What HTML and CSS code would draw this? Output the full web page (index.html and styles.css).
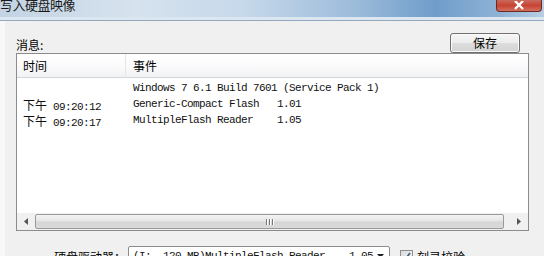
FILE: index.html
```html
<!DOCTYPE html>
<html lang="zh-CN">
<head>
<meta charset="utf-8">
<link rel="stylesheet" href="styles.css">
</head>
<body>
<div class="window">
  <div class="titlebar">
    <span class="title">写入硬盘映像</span>
    <span class="close"><svg width="12" height="9" viewBox="0 0 12 9"><path d="M2 0 L10 8 M10 0 L2 8" stroke="#fff" stroke-width="2.4" fill="none"/></svg></span>
  </div>
  <div class="body">
    <div class="toprow">
      <span class="label">消息:</span>
      <button class="btn">保存</button>
    </div>
    <div class="listbox">
      <div class="header">
        <div class="col-time">时间</div>
        <div class="col-event">事件</div>
      </div>
      <div class="rows">
        <div class="row"><div class="col-time mono"></div><div class="col-event mono">Windows 7 6.1 Build 7601 (Service Pack 1)</div></div>
        <div class="row"><div class="col-time mono"><span class="cjk">下午</span> 09:20:12</div><div class="col-event mono">Generic-Compact Flash   1.01</div></div>
        <div class="row"><div class="col-time mono"><span class="cjk">下午</span> 09:20:17</div><div class="col-event mono">MultipleFlash Reader    1.05</div></div>
      </div>
      <div class="hscroll">
        <div class="arrow"><svg width="4" height="7" viewBox="0 0 4 7"><path d="M4 0 L0 3.5 L4 7 Z" fill="#555"/></svg></div>
        <div class="thumb"><span class="grip"></span><span class="grip"></span><span class="grip"></span></div>
        <div class="track"></div>
        <div class="arrow"><svg width="4" height="7" viewBox="0 0 4 7"><path d="M0 0 L4 3.5 L0 7 Z" fill="#555"/></svg></div>
      </div>
    </div>
    <div class="bottomrow">
      <span class="blabel">硬盘驱动器：</span>
      <div class="combo"><span class="mono combotext">(I:  120 MB)MultipleFlash Reader    1.05</span><span class="drop"><svg width="7" height="4" viewBox="0 0 7 4"><path d="M0 0 L7 0 L3.5 4 Z" fill="#222"/></svg></span></div>
      <span class="check"><svg width="9" height="9" viewBox="0 0 9 9"><path d="M1 4.5 L3.5 7 L8 1" stroke="#4a5f86" stroke-width="1.8" fill="none"/></svg></span>
      <span class="clabel">刻录校验</span>
    </div>
  </div>
</div>
</body>
</html>
```

FILE: styles.css
```css
* { box-sizing: border-box; }
html, body { margin: 0; padding: 0; }
body {
  width: 544px;
  height: 256px;
  overflow: hidden;
  background: #f0f0f0;
  font-family: "Noto Sans CJK SC", "Liberation Sans", sans-serif;
  font-size: 12px;
  color: #000;
}
.window {
  width: 544px;
  height: 256px;
  display: flex;
  flex-direction: column;
  overflow: hidden;
}
.titlebar {
  height: 21px;
  flex: none;
  display: flex;
  justify-content: space-between;
  align-items: flex-start;
  background: linear-gradient(to right, #c3d3e3 0%, #d6e2ee 25%, #c6d8ea 45%, #9dbcdb 65%, #6f9dca 80%, #8fb3d6 92%, #b8cfe4 100%);
  border-bottom: 1px solid #93a7bd;
  box-shadow: inset 0 -3px 0 #dce6f0;
}
.title {
  font-size: 13px;
  line-height: 13px;
  margin-top: -2px;
  color: #1a1a1a;
  letter-spacing: -0.5px;
}
.close {
  width: 46px;
  height: 12px;
  margin-right: 2px;
  display: flex;
  align-items: center;
  justify-content: center;
  background: linear-gradient(to bottom, #c86a5e 0%, #c74433 50%, #d4705e 100%);
  border: 1px solid #6b2a22;
  border-top: none;
  border-radius: 0 0 4px 4px;
}
.body {
  flex: 1;
  display: flex;
  flex-direction: column;
  padding: 12px 0 0 11px;
  border-left: 5px solid #f8f8f8;
}
.toprow {
  width: 504px;
  height: 20px;
  display: flex;
  justify-content: space-between;
  align-items: center;
}
.label {
  line-height: 14px;
  margin-top: 4px;
}
.btn {
  width: 70px;
  height: 20px;
  margin: 0;
  padding: 0;
  font-family: "Noto Sans CJK SC", sans-serif;
  font-size: 12px;
  line-height: 16px;
  color: #000;
  border: 1px solid #707070;
  border-radius: 3px;
  background: linear-gradient(to bottom, #f6f6f6 0%, #ececec 48%, #dddddd 52%, #d3d3d3 100%);
  box-shadow: inset 0 0 0 1px #fbfbfb;
}
.listbox {
  width: 513px;
  height: 178px;
  border: 1px solid #8c8c8c;
  background: #fff;
  display: flex;
  flex-direction: column;
}
.header {
  height: 24px;
  flex: none;
  display: flex;
  align-items: center;
  background: linear-gradient(to bottom, #ffffff 0%, #fbfbfc 50%, #f1f2f4 100%);
  border-bottom: 1px solid #d5d5d5;
}
.col-time {
  width: 109px;
  padding-left: 6px;
  flex: none;
  white-space: pre;
}
.header .col-time {
  border-right: 1px solid #e6e6e6;
  height: 24px;
  line-height: 24px;
}
.col-event {
  padding-left: 7px;
  white-space: pre;
}
.rows {
  flex: 1;
  padding-top: 2px;
}
.row {
  height: 16px;
  display: flex;
  align-items: center;
}
.mono {
  font-family: "Liberation Mono", monospace;
  font-size: 11px;
  letter-spacing: -0.6px;
  color: #111;
}
.cjk {
  font-family: "Noto Sans CJK SC", sans-serif;
  font-size: 12px;
  letter-spacing: 0;
}
.row .col-time { padding-left: 6px; }
.row .col-event { padding-left: 7px; }
.hscroll {
  height: 17px;
  flex: none;
  display: flex;
  align-items: stretch;
  background: #f0f0f0;
  padding: 1px 0;
}
.arrow {
  width: 18px;
  flex: none;
  display: flex;
  align-items: center;
  justify-content: center;
}
.thumb {
  width: 469px;
  flex: none;
  border: 1px solid #9a9a9a;
  border-radius: 2px;
  background: linear-gradient(to bottom, #f3f3f3 0%, #e6e6e6 45%, #d6d6d6 55%, #dadada 100%);
  display: flex;
  justify-content: center;
  align-items: center;
  gap: 1px;
}
.grip {
  width: 1px;
  height: 6px;
  background: #777;
  box-shadow: 1px 0 0 #fff;
  margin-right: 1px;
}
.track { flex: 1; }
.bottomrow {
  margin-top: 15px;
  display: flex;
  align-items: center;
  height: 20px;
}
.blabel {
  width: 112px;
  text-align: right;
  padding-right: 2px;
}
.combo {
  width: 262px;
  height: 20px;
  border: 1px solid #8c8c8c;
  border-radius: 2px;
  background: #fff;
  display: flex;
  align-items: center;
  justify-content: space-between;
  padding-left: 4px;
}
.combotext {
  white-space: pre;
}
.drop {
  width: 16px;
  display: flex;
  justify-content: center;
  margin-right: 2px;
}
.check {
  width: 13px;
  height: 13px;
  margin-left: 10px;
  border: 1px solid #8f8f8f;
  background: linear-gradient(to bottom right, #dcdcdc, #f6f6f6);
  display: flex;
  align-items: center;
  justify-content: center;
}
.clabel {
  margin-left: 4px;
}
```
